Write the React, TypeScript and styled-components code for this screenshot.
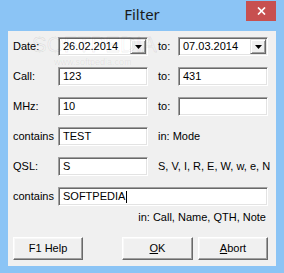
import React from "react";
import styled, { createGlobalStyle } from "styled-components";

const Global = createGlobalStyle`
  html, body {
    margin: 0;
    padding: 0;
    width: 284px;
    height: 273px;
    overflow: hidden;
    background: #8bc4f5;
  }
  * { box-sizing: border-box; }
`;

const Window = styled.div`
  width: 284px;
  height: 273px;
  display: flex;
  flex-direction: column;
  background: #8bc4f5;
  font-family: "Liberation Sans", Arial, sans-serif;
  font-size: 11px;
  color: #000;
`;

const TitleBar = styled.div`
  height: 31px;
  flex: none;
  display: grid;
  grid-template-columns: 1fr auto 1fr;
  padding: 0 8px;
`;

const Title = styled.div`
  grid-column: 2;
  margin-top: 4px;
  font-family: "Noto Sans", "Open Sans", sans-serif;
  font-size: 15px;
  line-height: 20px;
  color: #1a1a1a;
`;

const CloseButton = styled.div`
  grid-column: 3;
  justify-self: end;
  align-self: start;
  margin-top: 1px;
  width: 30px;
  height: 20px;
  background: #c75050;
  display: flex;
  align-items: center;
  justify-content: center;
`;

const Client = styled.div`
  flex: 1;
  margin: 0 8px 7px 8px;
  background: #f0f0f0;
  padding: 6px 8px 6px 5px;
  position: relative;
  display: flex;
  flex-direction: column;
`;

const Form = styled.div`
  display: grid;
  grid-template-columns: 45px 90px 10px 20px 90px;
  grid-auto-rows: 19px;
  row-gap: 11px;
  align-items: center;
`;

const Label = styled.span<{ $col?: string }>`
  grid-column: ${(p) => p.$col ?? "auto"};
  line-height: 13px;
  white-space: nowrap;
`;

const Field = styled.div<{ $col?: string }>`
  grid-column: ${(p) => p.$col ?? "auto"};
  height: 19px;
  background: #fff;
  border-style: solid;
  border-width: 1px;
  border-color: #a0a0a0 #ffffff #ffffff #a0a0a0;
  box-shadow: inset 1px 1px #696969, inset -1px -1px #e3e3e3;
  padding: 1px 1px 1px 4px;
  display: flex;
  align-items: center;
  line-height: 15px;
  white-space: nowrap;
  overflow: hidden;
`;

const FieldText = styled.span`
  flex: 1;
  display: flex;
  align-items: center;
`;

const Caret = styled.span`
  display: inline-block;
  width: 1px;
  height: 12px;
  background: #000;
  margin-left: 1px;
`;

const DropButton = styled.div`
  width: 16px;
  height: 15px;
  flex: none;
  background: #f0f0f0;
  border-style: solid;
  border-width: 1px;
  border-color: #e3e3e3 #696969 #696969 #e3e3e3;
  box-shadow: inset 1px 1px #ffffff, inset -1px -1px #a0a0a0;
  display: flex;
  align-items: center;
  justify-content: center;
`;

const Note = styled.div`
  margin-top: 5px;
  line-height: 13px;
  text-align: right;
  padding-right: 2px;
`;

const ButtonRow = styled.div`
  display: flex;
  margin-top: 13px;
  gap: 5px;
  padding-left: 0px;
`;

const Button = styled.div<{ $w: number; $push?: boolean }>`
  width: ${(p) => p.$w}px;
  height: 23px;
  margin-right: ${(p) => (p.$push ? "auto" : "0")};
  background: #f0f0f0;
  border-style: solid;
  border-width: 1px;
  border-color: #ffffff #696969 #696969 #ffffff;
  box-shadow: inset -1px -1px #a0a0a0, inset 1px 1px #f8f8f8;
  display: flex;
  align-items: center;
  justify-content: center;
  line-height: 13px;
`;

const Watermark = styled.div`
  position: absolute;
  left: 24px;
  top: 2px;
  pointer-events: none;
  display: flex;
  flex-direction: column;
`;

const WatermarkBig = styled.span`
  font-family: "Liberation Sans", Arial, sans-serif;
  font-size: 22px;
  line-height: 24px;
  color: rgba(0, 0, 0, 0.025);
  -webkit-text-stroke: 1px rgba(0, 0, 0, 0.07);
  letter-spacing: 0px;
`;

const WatermarkSmall = styled.span`
  margin-left: 22px;
  font-size: 9px;
  line-height: 10px;
  color: rgba(0, 0, 0, 0.08);
`;

const Arrow = () => (
  <svg width="7" height="4" viewBox="0 0 7 4">
    <path d="M0 0 H7 L3.5 4 Z" fill="#000" />
  </svg>
);

const Combo = ({ value, col }: { value: string; col?: string }) => (
  <Field $col={col}>
    <FieldText>{value}</FieldText>
    <DropButton>
      <Arrow />
    </DropButton>
  </Field>
);

export default function App() {
  return (
    <>
      <Global />
      <Window>
        <TitleBar>
          <Title>Filter</Title>
          <CloseButton>
            <svg width="9" height="8" viewBox="0 0 9 8">
              <path d="M1 0.5 L8 7.5 M8 0.5 L1 7.5" stroke="#fff" strokeWidth="1.7" />
            </svg>
          </CloseButton>
        </TitleBar>
        <Client>
          <Form>
            <Label>Date:</Label>
            <Combo value="26.02.2014" />
            <Label $col="4">to:</Label>
            <Combo value="07.03.2014" col="5" />

            <Label>Call:</Label>
            <Field>123</Field>
            <Label $col="4">to:</Label>
            <Field $col="5">431</Field>

            <Label>MHz:</Label>
            <Field>10</Field>
            <Label $col="4">to:</Label>
            <Field $col="5" />

            <Label>contains</Label>
            <Field>TEST</Field>
            <Label $col="4 / span 2">in: Mode</Label>

            <Label>QSL:</Label>
            <Field>S</Field>
            <Label $col="4 / span 2">S, V, I, R, E, W, w, e, N</Label>

            <Label>contains</Label>
            <Field $col="2 / span 4">
              <FieldText>
                SOFTPEDIA
                <Caret />
              </FieldText>
            </Field>
          </Form>
          <Note>in: Call, Name, QTH, Note</Note>
          <ButtonRow>
            <Button $w={70} $push>
              F1 Help
            </Button>
            <Button $w={71}>
              <span>
                <u>O</u>K
              </span>
            </Button>
            <Button $w={70}>
              <span>
                <u>A</u>bort
              </span>
            </Button>
          </ButtonRow>
          <Watermark>
            <WatermarkBig>SOFTPEDIA</WatermarkBig>
            <WatermarkSmall>www.softpedia.com</WatermarkSmall>
          </Watermark>
        </Client>
      </Window>
    </>
  );
}
